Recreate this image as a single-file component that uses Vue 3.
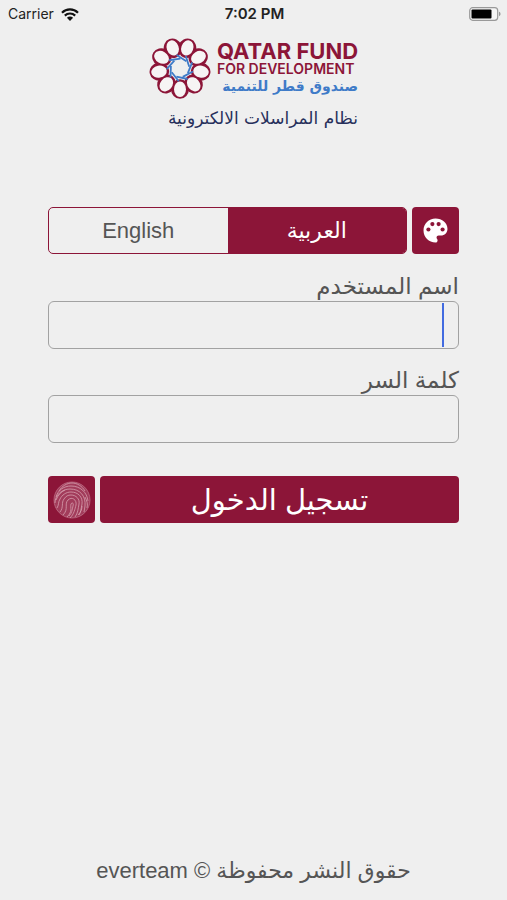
<script setup>
import { ref } from 'vue'

const language = ref('ar')
const username = ref('')
const password = ref('')
const petals = Array.from({ length: 9 }, (_, i) => i * 40)
const ridges = [
  'M8 12C11 7 16 4 21 4s10 3 13 8',
  'M5 18C7 11 13 7 20 7c9 0 16 6 17 15',
  'M4 24c0-8 7-14 15-14 10 0 16 7 15 17l-1 6',
  'M6 29c2-3 1-6 3-9 2-4 6-7 11-7 7 0 12 5 11 12-1 5-1 8-3 11',
  'M9 33c4-5 1-9 4-13 2-3 4-4 7-4 5 0 9 4 8 9-1 5-1 9-4 13',
  'M12 36c6-6 1-11 5-15 4-4 9 0 8 5-1 4-2 9-6 13',
  'M16 38c6-6 3-9 4-13 1-2 3-1 2 2-1 4-1 7-4 10',
  'M5 21c2-5 5-8 9-10M34 18c2 4 3 7 2 11M27 36c3-3 4-6 4-9',
]
</script>

<template>
  <div class="screen" dir="rtl" lang="ar">
    <div class="status" dir="ltr">
      <div class="carrier">
        <span>Carrier</span>
        <svg class="wifi" viewBox="0 0 18 13" aria-hidden="true">
          <path d="M1 4.7C5.4.3 12.6.3 17 4.7M3.8 7.6c2.9-2.8 7.5-2.8 10.4 0" fill="none" stroke="#111" stroke-width="2.2" />
          <path d="M5.9 9.8c1.7-1.6 4.5-1.6 6.2 0L9 13z" fill="#111" />
        </svg>
      </div>
      <span class="time">7:02 PM</span>
      <svg class="battery" viewBox="0 0 32 14" aria-label="Battery" role="img">
        <rect x="0.7" y="0.7" width="28" height="12.6" rx="3" fill="#f5f5f5" stroke="#999" stroke-width="1.2" />
        <rect x="2.5" y="2.5" width="20" height="9" rx="1" fill="#000" />
        <path d="M30 4.8c2 .6 2 3.8 0 4.4z" fill="#999" />
      </svg>
    </div>

    <header class="brand">
      <div class="logo" dir="ltr">
        <svg class="emblem" viewBox="-31 -31 62 62" aria-hidden="true">
          <g v-for="angle in petals" :key="angle" :transform="`rotate(${angle})`">
            <ellipse cy="21" rx="9" ry="9.8" fill="#8c1538" />
          </g>
          <g v-for="angle in petals" :key="`inner-${angle}`" :transform="`rotate(${angle})`">
            <ellipse cy="21.3" rx="6" ry="7.8" fill="#f6f4f4" />
          </g>
          <g v-for="angle in petals" :key="`star-${angle}`" :transform="`rotate(${angle})`">
            <path d="M-3.600 8.600 7.600 11" fill="none" stroke="#3f7bc8" stroke-width="1.800" />
          </g>
        </svg>
        <div class="wordmark">
          <span class="name">QATAR FUND</span>
          <span class="purpose">FOR DEVELOPMENT</span>
          <span class="arabic" dir="rtl">صندوق قطر للتنمية</span>
        </div>
      </div>
      <h1 class="system">نظام المراسلات الالكترونية</h1>
    </header>

    <form class="login" @submit.prevent>
      <div class="options">
        <button class="square" type="button" aria-label="المظهر">
          <svg class="palette" viewBox="0 0 24 24" aria-hidden="true">
            <path fill="#fff" d="M12 .5C5.600.5.500 5.600.500 12S5.600 23.500 12 23.500c1.200 0 2-.9 2-2 0-.5-.2-1-.5-1.300-.3-.4-.5-.8-.5-1.400 0-1.100.9-2 2-2h2.200c3.500 0 6.300-2.800 6.300-6.300C23.500 4.900 18.400.5 12 .5z" />
            <g fill="#8c1538">
              <circle cx="5.200" cy="11" r="2" />
              <circle cx="9" cy="5.800" r="2" />
              <circle cx="15" cy="5.800" r="2" />
              <circle cx="18.800" cy="11" r="2" />
            </g>
          </svg>
        </button>
        <div class="languages">
          <button type="button" :class="{ active: language === 'ar' }" @click="language = 'ar'">العربية</button>
          <button type="button" :class="{ active: language === 'en' }" lang="en" @click="language = 'en'">English</button>
        </div>
      </div>

      <div class="field">
        <label for="username">اسم المستخدم</label>
        <div class="box">
          <input id="username" v-model="username" type="text" autocomplete="username" />
          <span v-if="!username" class="caret"></span>
        </div>
      </div>
      <div class="field">
        <label for="password">كلمة السر</label>
        <div class="box">
          <input id="password" v-model="password" type="password" autocomplete="current-password" />
        </div>
      </div>

      <div class="actions">
        <button class="submit" type="submit">تسجيل الدخول</button>
        <button class="square" type="button" aria-label="بصمة الإصبع">
          <svg class="finger" viewBox="2 2 38 38" aria-hidden="true">
            <circle cx="21" cy="21" r="18" fill="#a23c5b" stroke="#c98499" stroke-width="0.6" />
            <path v-for="ridge in ridges" :key="ridge" :d="ridge" fill="none" stroke="#d79fae" stroke-width="0.8" />
          </svg>
        </button>
      </div>
    </form>

    <footer class="copyright">حقوق النشر محفوظة © everteam</footer>
  </div>
</template>

<style>
body {
  margin: 0;
  background: #efefef;
}
</style>

<style scoped>
.screen {
  box-sizing: border-box;
  min-height: 100vh;
  display: flex;
  flex-direction: column;
  background: #efefef;
  color: #555;
  font-family: "Liberation Sans", "DejaVu Sans", sans-serif;
}
.status {
  display: grid;
  grid-template-columns: 1fr auto 1fr;
  align-items: center;
  height: 28px;
  padding: 0 6px 0 8px;
  color: #222;
  font: 14px/28px Inter, sans-serif;
}
.carrier {
  display: flex;
  align-items: center;
  gap: 7px;
}
.wifi {
  width: 18px;
  height: 13px;
}
.time {
  font-size: 15px;
  font-weight: 600;
}
.battery {
  width: 32px;
  height: 14px;
  justify-self: end;
}
.brand {
  display: flex;
  flex-direction: column;
  align-self: center;
  padding-top: 9px;
}
.logo {
  display: flex;
  align-items: center;
  gap: 6px;
}
.emblem {
  width: 62px;
  height: 62px;
}
.wordmark {
  display: flex;
  flex-direction: column;
  white-space: nowrap;
}
.name {
  color: #8c1538;
  font: 700 22px/20px Inter, sans-serif;
}
.purpose {
  color: #8c1538;
  font: 600 14px/16px Inter, sans-serif;
}
.arabic {
  color: #3f7bc8;
  font: bold 14px/18px "DejaVu Sans", sans-serif;
}
.system {
  margin: 8px 0 0;
  color: #27305c;
  font: 17px/22px "DejaVu Sans", sans-serif;
  white-space: nowrap;
}
.login {
  display: flex;
  flex-direction: column;
  padding: 78px 48px 0;
}
button {
  margin: 0;
  padding: 0;
  border: 0;
  background: none;
  color: inherit;
  font: inherit;
  cursor: pointer;
}
.options,
.actions {
  display: flex;
  gap: 5px;
}
.square {
  display: flex;
  flex: none;
  align-items: center;
  justify-content: center;
  width: 47px;
  height: 47px;
  border-radius: 4px;
  background: #8c1538;
}
.palette {
  width: 25px;
  height: 25px;
}
.finger {
  width: 38px;
  height: 38px;
}
.languages {
  box-sizing: border-box;
  display: flex;
  flex: 1;
  height: 47px;
  overflow: hidden;
  border: 1px solid #8c1538;
  border-radius: 5px;
  font-size: 22px;
}
.languages button {
  flex: 1;
}
.languages .active {
  background: #8c1538;
  color: #fff;
}
.field {
  display: flex;
  flex-direction: column;
}
.options + .field {
  margin-top: 17px;
}
.field + .field {
  margin-top: 16px;
}
.field label {
  font-size: 23px;
  line-height: 30px;
}
.box {
  position: relative;
  display: flex;
}
.box input {
  box-sizing: border-box;
  width: 100%;
  height: 48px;
  padding: 0 15px;
  border: 1px solid #a2a2a2;
  border-radius: 6px;
  outline: 0;
  background: transparent;
  color: #555;
  font: 22px "Liberation Sans", "DejaVu Sans", sans-serif;
}
.caret {
  position: absolute;
  top: 2px;
  bottom: 2px;
  right: 15px;
  width: 2px;
  background: #426be0;
}
.actions {
  margin-top: 33px;
}
.submit {
  flex: 1;
  border-radius: 4px;
  background: #8c1538;
  color: #fff;
  font-size: 29px;
}
.copyright {
  margin-top: auto;
  padding-bottom: 14px;
  font-size: 22px;
  line-height: 30px;
  text-align: center;
}
</style>
